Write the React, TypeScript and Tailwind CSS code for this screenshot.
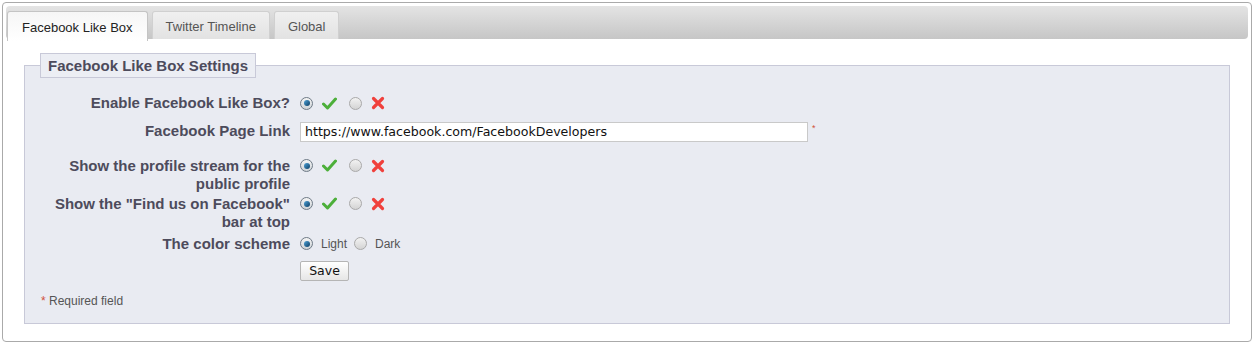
import React from "react";

const Radio = ({ checked }: { checked?: boolean }) => (
  <span
    className={
      "relative flex h-[13px] w-[13px] shrink-0 items-center justify-center rounded-full border " +
      (checked
        ? "border-[#6f7a86] bg-gradient-to-b from-[#f4f4f4] to-[#cfd4d8]"
        : "border-[#a9a9a9] bg-gradient-to-b from-[#f2f2f2] to-[#d4d4d4]")
    }
  >
    {checked && (
      <span className="h-[6px] w-[6px] rounded-full bg-gradient-to-br from-[#4fa3d8] to-[#0b3f66]" />
    )}
  </span>
);

const Check = () => (
  <svg width="15" height="13" viewBox="0 0 15 13" className="block shrink-0">
    <path
      d="M1.5 7 L5.5 11 L13.5 2"
      fill="none"
      stroke="#4caf3a"
      strokeWidth="3"
      strokeLinecap="round"
      strokeLinejoin="round"
    />
  </svg>
);

const Cross = () => (
  <svg width="14" height="14" viewBox="0 0 14 14" className="block shrink-0">
    <path
      d="M2.5 2.5 L11.5 11.5 M11.5 2.5 L2.5 11.5"
      fill="none"
      stroke="#f0403c"
      strokeWidth="3.2"
      strokeLinecap="round"
    />
  </svg>
);

const YesNo = () => (
  <div className="flex h-[18px] items-center">
    <Radio checked />
    <span className="ml-[9px] flex">
      <Check />
    </span>
    <span className="ml-[12px] flex">
      <Radio />
    </span>
    <span className="ml-[9px] flex">
      <Cross />
    </span>
  </div>
);

const Label = ({ children }: { children: React.ReactNode }) => (
  <div className="w-[253px] shrink-0 text-right text-[15px] font-bold leading-[18.5px] text-[#4d4b5c]">
    {children}
  </div>
);

const tabs = ["Facebook Like Box", "Twitter Timeline", "Global"];

export default function App() {
  return (
    <div
      className="bg-white p-[2px] pr-[7px] text-[#333]"
      style={{ fontFamily: '"Liberation Sans", Arial, sans-serif' }}
    >
      <div className="h-[340px] rounded-[4px] border border-[#aaaaaa] p-[3px]">
        <div className="flex h-[33px] items-end gap-[4px] rounded-[4px] bg-gradient-to-b from-[#e4e4e4] to-[#c6c6c6] px-[1px]">
          {tabs.map((t, i) => (
            <div
              key={t}
              className={
                "flex items-center rounded-t-[3px] border border-b-0 pt-[2px] text-[13px] " +
                (i === 0
                  ? "mb-[-2px] h-[30px] border-[#c4c4c4] bg-gradient-to-b from-[#f6f6f6] to-[#ffffff] px-[14px] text-[#222]"
                  : "h-[28px] border-[#d0d0d0] bg-gradient-to-b from-[#f0f0f0] to-[#e2e2e2] px-[13px] text-[#555]")
              }
            >
              {t}
            </div>
          ))}
        </div>

        <div className="px-[18px] pt-[14px]">
          <fieldset className="h-[271px] border border-[#c8c9d8] bg-[#e9ebf2] pb-0 pl-[12px] pr-[12px] pt-[16px]">
            <legend className="ml-[3px] border border-[#c8c9d8] bg-[#eceef4] px-[7px] py-[2px] text-[15px] font-bold leading-[19px] text-[#4d4b5c]">
              Facebook Like Box Settings
            </legend>

            <div className="flex items-start gap-[10px]">
              <Label>Enable Facebook Like Box?</Label>
              <YesNo />
            </div>

            <div className="mt-[9px] flex items-center gap-[10px]">
              <Label>Facebook Page Link</Label>
              <input
                readOnly
                value="https://www.facebook.com/FacebookDevelopers"
                className="h-[20px] w-[508px] border border-[#c9c9c9] bg-white px-[4px] text-[13px] text-[#111] outline-none"
                style={{ fontFamily: '"DejaVu Sans", Verdana, sans-serif', fontSize: "12.6px" }}
              />
              <span className="-ml-[6px] -mt-[6px] text-[9px] text-[#d0503a]">*</span>
            </div>

            <div className="mt-[15px] flex items-start gap-[10px]">
              <Label>
                Show the profile stream for the
                <br />
                public profile
              </Label>
              <YesNo />
            </div>

            <div className="mt-[1px] flex items-start gap-[10px]">
              <Label>
                Show the "Find us on Facebook"
                <br />
                bar at top
              </Label>
              <YesNo />
            </div>

            <div className="mt-[3px] flex items-start gap-[10px]">
              <Label>The color scheme</Label>
              <div className="flex h-[18px] items-center text-[12px] text-[#555]">
                <Radio checked />
                <span className="ml-[8px]">Light</span>
                <span className="ml-[7px] flex">
                  <Radio />
                </span>
                <span className="ml-[8px]">Dark</span>
              </div>
            </div>

            <div className="mt-[8px] flex gap-[10px]">
              <div className="w-[253px] shrink-0" />
              <button
                className="h-[20px] w-[49px] rounded-[2px] border border-[#b5b5b5] bg-gradient-to-b from-[#ffffff] to-[#e6e6e6] text-[13px] leading-[18px] text-[#111]"
                style={{ fontFamily: '"DejaVu Sans", Verdana, sans-serif', fontSize: "12.5px" }}
              >
                Save
              </button>
            </div>

            <div className="ml-[4px] mt-[11px] text-[12px] text-[#555]">
              <span className="text-[#d0503a]">*</span> Required field
            </div>
          </fieldset>
        </div>
      </div>
    </div>
  );
}
